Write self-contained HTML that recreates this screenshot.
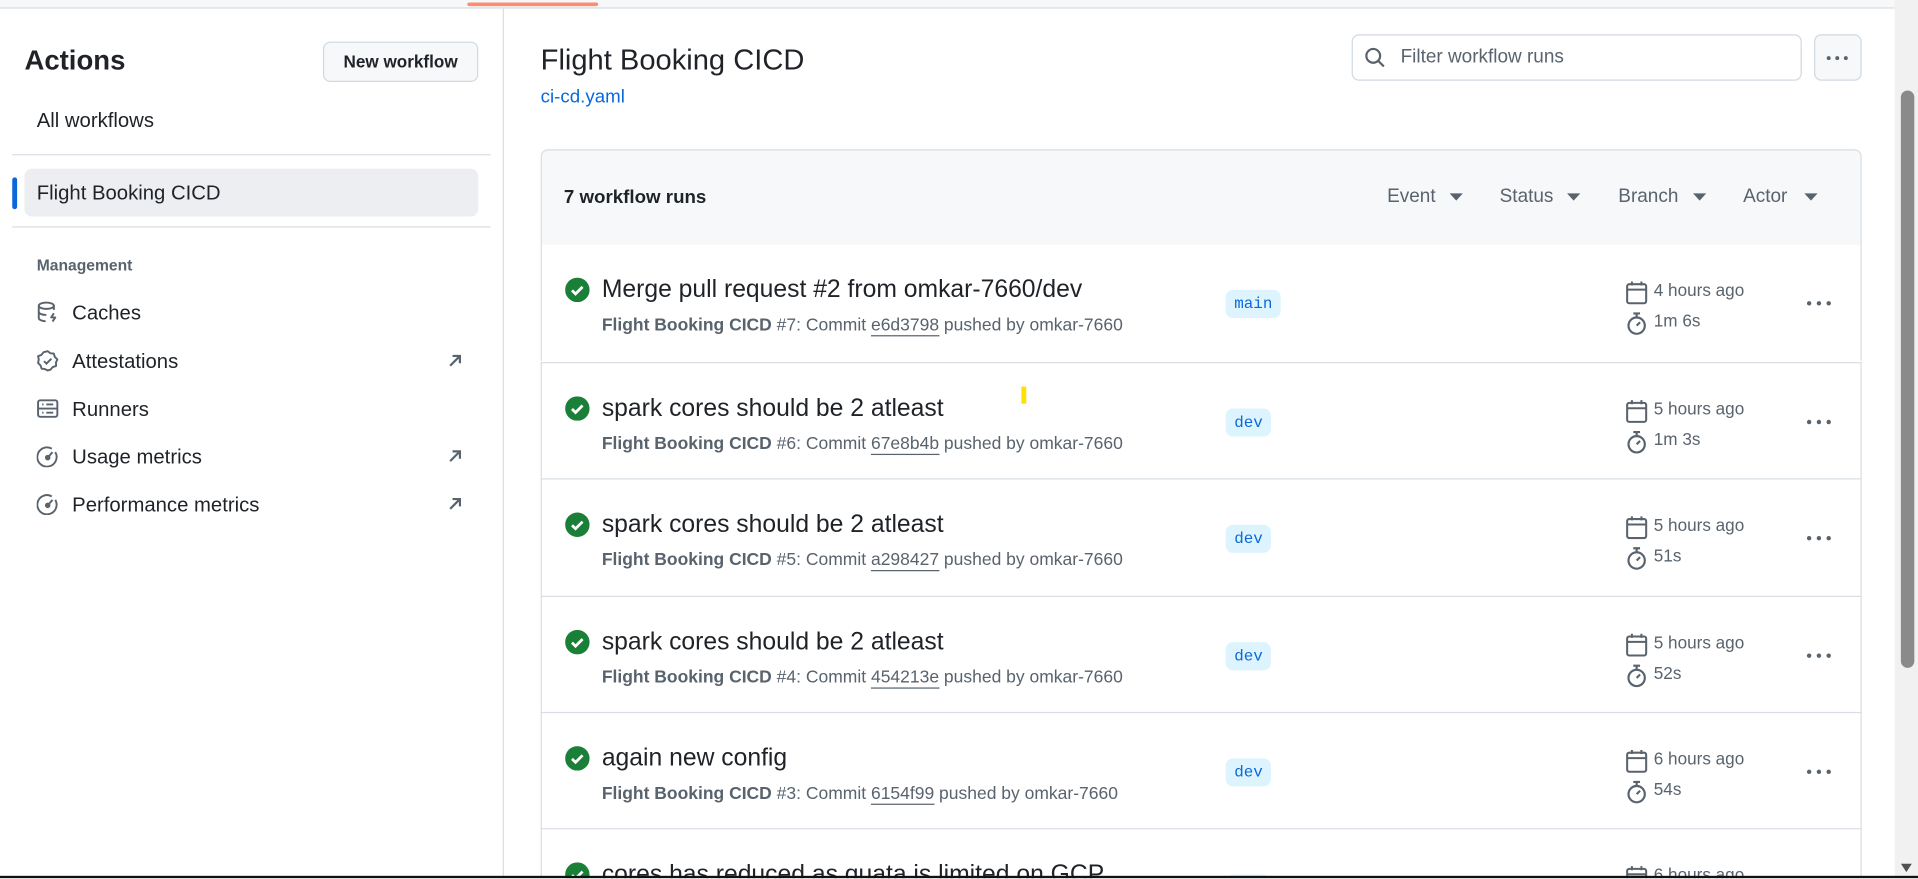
<!DOCTYPE html>
<html><head><meta charset="utf-8"><style>
html,body{margin:0;padding:0;width:1918px;height:879px;overflow:hidden;background:#fff;font-family:"Liberation Sans",sans-serif;color:#1f2328}
#clip{position:absolute;left:0;top:0;width:1918px;height:879px;overflow:hidden}
#w{position:absolute;left:0;top:0;width:1568px;height:718px;transform:scale(1.22321);transform-origin:0 0;overflow:hidden}
.a{position:absolute;white-space:nowrap}
.top{left:0;top:0;width:1549px;height:6px;background:#f6f8fa;border-bottom:1px solid #d8dee4}
.side-item{position:absolute;left:30px;font-size:16.6px;color:#1f2328;white-space:nowrap}
.mi{position:absolute;left:30px;width:18px;height:18px}
.ext{position:absolute;left:365px;width:14px;height:14px}
.row{position:absolute;left:442px;width:1078px;height:95px;border-top:1px solid #d8dee4;border-left:1px solid #d8dee4;border-right:1px solid #d8dee4;background:#fff;overflow:hidden}
.row .chk{position:absolute;left:19px;top:27px;width:20px;height:20px}
.row .t{position:absolute;left:49px;top:26px;font-size:20.2px;color:#1f2328;white-space:nowrap}
.row .s{position:absolute;left:49px;top:58px;font-size:14.3px;color:#59636e;white-space:nowrap}
.row .s b{font-weight:bold}
.row .s u{text-decoration:none;border-bottom:1px solid #59636e}
.row .br{position:absolute;left:559px;top:37px;height:23px;line-height:23px;padding:0 7px;background:#ddf4ff;color:#0969da;border-radius:6px;font-family:"Liberation Mono",monospace;font-size:13px}
.row .d{position:absolute;left:886px;top:29px;font-size:14px;color:#59636e;white-space:nowrap}
.row .u{position:absolute;left:886px;top:54px;font-size:14px;color:#59636e;white-space:nowrap}
.row .d span,.row .u span{position:absolute;left:23px;top:0}
.row .m{position:absolute;left:1033px;top:45px;line-height:0}
</style></head><body><div id="clip"><div id="w">
<div class="a top"></div>
<div class="a" style="left:382px;top:2px;width:107px;height:3px;background:#fd8c73;border-radius:2px"></div>
<div class="a" style="left:411px;top:7px;width:1px;height:711px;background:#d8dee4"></div>

<div class="a" style="left:20px;top:37px;font-size:22.5px;font-weight:600">Actions</div>
<div class="a" style="left:264px;top:34px;width:125px;height:31px;border:1px solid #d1d9e0;border-radius:6px;background:#f6f8fa;font-size:14px;font-weight:600;text-align:center;line-height:31px">New workflow</div>
<div class="side-item" style="top:89px">All workflows</div>
<div class="a" style="left:10px;top:126px;width:391px;height:1px;background:#d8dee4"></div>
<div class="a" style="left:20px;top:138px;width:371px;height:39px;background:#eceef1;border-radius:6px"></div>
<div class="a" style="left:10px;top:145px;width:4px;height:26px;background:#0969da;border-radius:3px"></div>
<div class="side-item" style="top:148px">Flight Booking CICD</div>
<div class="a" style="left:10px;top:185px;width:391px;height:1px;background:#d8dee4"></div>
<div class="a" style="left:30px;top:209px;font-size:12.8px;color:#59636e;font-weight:600">Management</div>

<svg class="mi" style="top:246px" viewBox="0 0 16 16" fill="none" stroke="#59636e" stroke-width="1.4"><ellipse cx="7" cy="3.5" rx="5.5" ry="2.3"/><path d="M1.5 3.5v9c0 1.2 2.4 2.2 5 2.3M12.5 3.5v3M1.5 8c0 1.2 2.4 2.2 5.5 2.2"/><path d="M12.5 9l-2 3h3l-2 3" stroke-linejoin="round"/></svg>
<div class="side-item" style="left:59px;top:246px">Caches</div>
<svg class="mi" style="top:286px" viewBox="0 0 16 16" fill="none" stroke="#59636e" stroke-width="1.4"><path d="M8 1l2 1.5 2.5.2.6 2.4L15 7l-1 2.2.1 2.5-2.4.8L10 14.4 8 15l-2-1-2.4-.3-.8-2.4L1 9.5 1.5 7 1 4.6l2.4-.9L5 1.7z" stroke-linejoin="round"/><path d="M5.3 8.2l1.8 1.8 3.6-3.6"/></svg>
<div class="side-item" style="left:59px;top:286px">Attestations</div>
<svg class="mi" style="top:325px" viewBox="0 0 16 16" fill="none" stroke="#59636e" stroke-width="1.4"><rect x="1" y="2" width="14" height="12" rx="1.5"/><path d="M1 8h14M4 5h1M7 5h5M4 11h1M7 11h5"/></svg>
<div class="side-item" style="left:59px;top:325px">Runners</div>
<svg class="mi" style="top:364px" viewBox="0 0 16 16" fill="none" stroke="#59636e" stroke-width="1.4"><path d="M13.5 5A7 7 0 1 1 11 2.5"/><circle cx="8" cy="9" r="1.3" fill="#59636e"/><path d="M8 9l3.5-4"/></svg>
<div class="side-item" style="left:59px;top:364px">Usage metrics</div>
<svg class="mi" style="top:403px" viewBox="0 0 16 16" fill="none" stroke="#59636e" stroke-width="1.4"><path d="M13.5 5A7 7 0 1 1 11 2.5"/><circle cx="8" cy="9" r="1.3" fill="#59636e"/><path d="M8 9l3.5-4"/></svg>
<div class="side-item" style="left:59px;top:403px">Performance metrics</div>
<svg class="ext" style="top:288px" viewBox="0 0 14 14" fill="none" stroke="#59636e" stroke-width="1.8"><path d="M3 11L11 3M5 3h6v6"/></svg>
<svg class="ext" style="top:366px" viewBox="0 0 14 14" fill="none" stroke="#59636e" stroke-width="1.8"><path d="M3 11L11 3M5 3h6v6"/></svg>
<svg class="ext" style="top:405px" viewBox="0 0 14 14" fill="none" stroke="#59636e" stroke-width="1.8"><path d="M3 11L11 3M5 3h6v6"/></svg>

<div class="a" style="left:442px;top:36px;font-size:23.8px">Flight Booking CICD</div>
<div class="a" style="left:442px;top:71px;font-size:15.3px;color:#0969da">ci-cd.yaml</div>
<div class="a" style="left:1105px;top:28px;width:366px;height:36px;border:1px solid #d1d9e0;border-radius:6px;background:#fff"></div>
<svg class="a" style="left:1115px;top:38px" width="18" height="18" viewBox="0 0 16 16" fill="none" stroke="#59636e" stroke-width="1.6"><circle cx="6.8" cy="6.8" r="5"/><path d="M10.5 10.5L14.5 14.5"/></svg>
<div class="a" style="left:1145px;top:38px;font-size:15.5px;color:#59636e">Filter workflow runs</div>
<div class="a" style="left:1483px;top:28px;width:37px;height:36px;border:1px solid #d1d9e0;border-radius:6px;background:#f6f8fa"></div>
<svg class="a" style="left:1492px;top:45px" width="20" height="5" viewBox="0 0 20 5"><circle cx="3" cy="2.5" r="1.6" fill="#59636e"/><circle cx="10" cy="2.5" r="1.6" fill="#59636e"/><circle cx="17" cy="2.5" r="1.6" fill="#59636e"/></svg>

<div class="a" style="left:442px;top:122px;width:1078px;height:78px;border:1px solid #d8dee4;border-radius:6px 6px 0 0;background:#f6f8fa"></div>
<div class="a" style="left:461px;top:153px;font-size:15.3px;font-weight:600">7 workflow runs</div>
<div class="a" style="left:1134px;top:152px;font-size:15.5px;color:#59636e">Event</div>
<div class="a" style="left:1226px;top:152px;font-size:15.5px;color:#59636e">Status</div>
<div class="a" style="left:1323px;top:152px;font-size:15.5px;color:#59636e">Branch</div>
<div class="a" style="left:1425px;top:152px;font-size:15.5px;color:#59636e">Actor</div>
<svg class="a" style="left:1185px;top:158px" width="11" height="6" viewBox="0 0 11 6"><path d="M0 0h11L5.5 6z" fill="#59636e"/></svg>
<svg class="a" style="left:1281px;top:158px" width="11" height="6" viewBox="0 0 11 6"><path d="M0 0h11L5.5 6z" fill="#59636e"/></svg>
<svg class="a" style="left:1384px;top:158px" width="11" height="6" viewBox="0 0 11 6"><path d="M0 0h11L5.5 6z" fill="#59636e"/></svg>
<svg class="a" style="left:1475px;top:158px" width="11" height="6" viewBox="0 0 11 6"><path d="M0 0h11L5.5 6z" fill="#59636e"/></svg>

<div class="row" style="top:200px;border-top:none">
<svg class="chk" viewBox="0 0 16 16"><circle cx="8" cy="8" r="8" fill="#1a7f37"/><path d="M4.5 8.3l2.3 2.3 4.6-4.6" stroke="#fff" stroke-width="1.8" fill="none"/></svg>
<div class="t">Merge pull request #2 from omkar-7660/dev</div>
<div class="s"><b>Flight Booking CICD</b> #7: Commit <u>e6d3798</u> pushed by omkar-7660</div>
<div class="br">main</div>
<div class="d"><svg width="18" height="20" viewBox="0 0 16 18" fill="none" stroke="#59636e" stroke-width="1.5"><rect x="1" y="3" width="14" height="14" rx="1.5"/><path d="M1 7h14M4.5 1v3M11.5 1v3"/></svg><span>4 hours ago</span></div>
<div class="u"><svg width="18" height="20" viewBox="0 0 16 18" fill="none" stroke="#59636e" stroke-width="1.6"><circle cx="8" cy="11" r="6"/><path d="M5.5 2h5M8 2v3M8 11l2.5-2.5"/></svg><span>1m 6s</span></div>
<div class="m"><svg width="22" height="6" viewBox="0 0 22 6"><circle cx="3" cy="3" r="1.8" fill="#59636e"/><circle cx="11" cy="3" r="1.8" fill="#59636e"/><circle cx="19" cy="3" r="1.8" fill="#59636e"/></svg></div>
</div>

<div class="row" style="top:296px">
<svg class="chk" viewBox="0 0 16 16"><circle cx="8" cy="8" r="8" fill="#1a7f37"/><path d="M4.5 8.3l2.3 2.3 4.6-4.6" stroke="#fff" stroke-width="1.8" fill="none"/></svg>
<div class="t">spark cores should be 2 atleast</div>
<div class="s"><b>Flight Booking CICD</b> #6: Commit <u>67e8b4b</u> pushed by omkar-7660</div>
<div class="br">dev</div>
<div style="position:absolute;left:392px;top:19px;width:4px;height:14px;background:#ffe000"></div>
<div class="d"><svg width="18" height="20" viewBox="0 0 16 18" fill="none" stroke="#59636e" stroke-width="1.5"><rect x="1" y="3" width="14" height="14" rx="1.5"/><path d="M1 7h14M4.5 1v3M11.5 1v3"/></svg><span>5 hours ago</span></div>
<div class="u"><svg width="18" height="20" viewBox="0 0 16 18" fill="none" stroke="#59636e" stroke-width="1.6"><circle cx="8" cy="11" r="6"/><path d="M5.5 2h5M8 2v3M8 11l2.5-2.5"/></svg><span>1m 3s</span></div>
<div class="m"><svg width="22" height="6" viewBox="0 0 22 6"><circle cx="3" cy="3" r="1.8" fill="#59636e"/><circle cx="11" cy="3" r="1.8" fill="#59636e"/><circle cx="19" cy="3" r="1.8" fill="#59636e"/></svg></div>
</div>

<div class="row" style="top:391px">
<svg class="chk" viewBox="0 0 16 16"><circle cx="8" cy="8" r="8" fill="#1a7f37"/><path d="M4.5 8.3l2.3 2.3 4.6-4.6" stroke="#fff" stroke-width="1.8" fill="none"/></svg>
<div class="t">spark cores should be 2 atleast</div>
<div class="s"><b>Flight Booking CICD</b> #5: Commit <u>a298427</u> pushed by omkar-7660</div>
<div class="br">dev</div>
<div class="d"><svg width="18" height="20" viewBox="0 0 16 18" fill="none" stroke="#59636e" stroke-width="1.5"><rect x="1" y="3" width="14" height="14" rx="1.5"/><path d="M1 7h14M4.5 1v3M11.5 1v3"/></svg><span>5 hours ago</span></div>
<div class="u"><svg width="18" height="20" viewBox="0 0 16 18" fill="none" stroke="#59636e" stroke-width="1.6"><circle cx="8" cy="11" r="6"/><path d="M5.5 2h5M8 2v3M8 11l2.5-2.5"/></svg><span>51s</span></div>
<div class="m"><svg width="22" height="6" viewBox="0 0 22 6"><circle cx="3" cy="3" r="1.8" fill="#59636e"/><circle cx="11" cy="3" r="1.8" fill="#59636e"/><circle cx="19" cy="3" r="1.8" fill="#59636e"/></svg></div>
</div>

<div class="row" style="top:487px">
<svg class="chk" viewBox="0 0 16 16"><circle cx="8" cy="8" r="8" fill="#1a7f37"/><path d="M4.5 8.3l2.3 2.3 4.6-4.6" stroke="#fff" stroke-width="1.8" fill="none"/></svg>
<div class="t">spark cores should be 2 atleast</div>
<div class="s"><b>Flight Booking CICD</b> #4: Commit <u>454213e</u> pushed by omkar-7660</div>
<div class="br">dev</div>
<div class="d"><svg width="18" height="20" viewBox="0 0 16 18" fill="none" stroke="#59636e" stroke-width="1.5"><rect x="1" y="3" width="14" height="14" rx="1.5"/><path d="M1 7h14M4.5 1v3M11.5 1v3"/></svg><span>5 hours ago</span></div>
<div class="u"><svg width="18" height="20" viewBox="0 0 16 18" fill="none" stroke="#59636e" stroke-width="1.6"><circle cx="8" cy="11" r="6"/><path d="M5.5 2h5M8 2v3M8 11l2.5-2.5"/></svg><span>52s</span></div>
<div class="m"><svg width="22" height="6" viewBox="0 0 22 6"><circle cx="3" cy="3" r="1.8" fill="#59636e"/><circle cx="11" cy="3" r="1.8" fill="#59636e"/><circle cx="19" cy="3" r="1.8" fill="#59636e"/></svg></div>
</div>

<div class="row" style="top:582px">
<svg class="chk" viewBox="0 0 16 16"><circle cx="8" cy="8" r="8" fill="#1a7f37"/><path d="M4.5 8.3l2.3 2.3 4.6-4.6" stroke="#fff" stroke-width="1.8" fill="none"/></svg>
<div class="t">again new config</div>
<div class="s"><b>Flight Booking CICD</b> #3: Commit <u>6154f99</u> pushed by omkar-7660</div>
<div class="br">dev</div>
<div class="d"><svg width="18" height="20" viewBox="0 0 16 18" fill="none" stroke="#59636e" stroke-width="1.5"><rect x="1" y="3" width="14" height="14" rx="1.5"/><path d="M1 7h14M4.5 1v3M11.5 1v3"/></svg><span>6 hours ago</span></div>
<div class="u"><svg width="18" height="20" viewBox="0 0 16 18" fill="none" stroke="#59636e" stroke-width="1.6"><circle cx="8" cy="11" r="6"/><path d="M5.5 2h5M8 2v3M8 11l2.5-2.5"/></svg><span>54s</span></div>
<div class="m"><svg width="22" height="6" viewBox="0 0 22 6"><circle cx="3" cy="3" r="1.8" fill="#59636e"/><circle cx="11" cy="3" r="1.8" fill="#59636e"/><circle cx="19" cy="3" r="1.8" fill="#59636e"/></svg></div>
</div>

<div class="row" style="top:677px;height:40px">
<svg class="chk" viewBox="0 0 16 16"><circle cx="8" cy="8" r="8" fill="#1a7f37"/><path d="M4.5 8.3l2.3 2.3 4.6-4.6" stroke="#fff" stroke-width="1.8" fill="none"/></svg>
<div class="t">cores has reduced as quata is limited on GCP</div>
<div class="br">dev</div>
<div class="d"><svg width="18" height="20" viewBox="0 0 16 18" fill="none" stroke="#59636e" stroke-width="1.5"><rect x="1" y="3" width="14" height="14" rx="1.5"/><path d="M1 7h14M4.5 1v3M11.5 1v3"/></svg><span>6 hours ago</span></div>
</div>

<div class="a" style="left:1549px;top:0;width:19px;height:718px;background:#f1f1f1"></div>
<div class="a" style="left:1554px;top:74px;width:11px;height:472px;background:#8a8a8a;border-radius:6px"></div>
<svg class="a" style="left:1554px;top:706px" width="9" height="7" viewBox="0 0 9 7"><path d="M0 0h9L4.5 7z" fill="#505050"/></svg>
<div class="a" style="left:0;top:716px;width:1568px;height:2px;background:#111"></div>
</div></div></body></html>
